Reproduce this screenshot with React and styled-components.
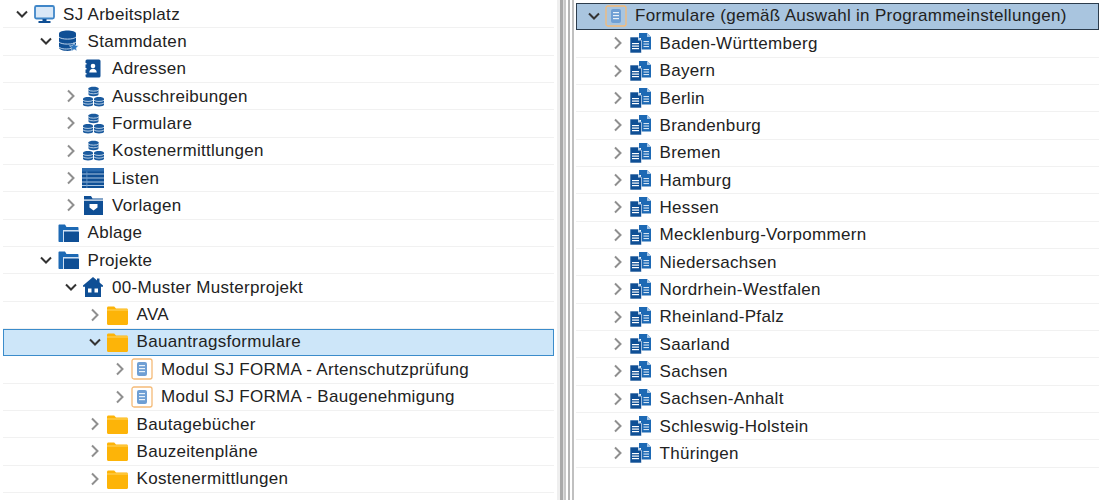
import React from 'react'
import styled, { createGlobalStyle } from 'styled-components'

const BLUE = '#0f4f95'
const ORANGE = '#fdb408'

const GlobalStyle = createGlobalStyle`
  html, body {
    margin: 0;
    padding: 0;
    background: #fff;
    overflow: hidden;
  }
`

const Monitor = () => (
  <svg width="21" height="20" viewBox="0 0 21 20">
    <rect x="1" y="2" width="19" height="12.500" rx="1.500" fill="#d9e8f7" stroke="#3f86c8" strokeWidth="1.800" />
    <rect x="8.500" y="15" width="4" height="2" fill={BLUE} />
    <rect x="4.500" y="17" width="12" height="2" fill={BLUE} />
  </svg>
)

const Database = () => (
  <svg width="21" height="22" viewBox="0 0 21 22">
    <path d="M1 3.500C1-.5 18-.5 18 3.500V17.500C18 22 1 22 1 17.500z" fill={BLUE} />
    <g fill="none" stroke="#cfe0f2" strokeWidth="0.900">
      <path d="M1 7c2 2.800 15 2.800 17 0" />
      <path d="M1 12c2 2.800 15 2.800 17 0" />
      <path d="M1 17c2 2.400 9 2.400 12 1.400" />
    </g>
    <path d="M16 12.500l1.400 3 3.200.3-2.400 2.100.8 3.100-3-1.700-3 1.700.8-3.100-2.400-2.100 3.200-.3z" fill="#2f78c0" stroke="#fff" strokeWidth="0.500" />
  </svg>
)

const AddressBook = () => (
  <svg width="16" height="19" viewBox="0 0 16 19">
    <rect x="0.500" y="0.500" width="15" height="18" rx="1.500" fill={BLUE} />
    <circle cx="8" cy="7" r="2.300" fill="#fff" />
    <path d="M4.300 13.500c0-5 7.400-5 7.400 0z" fill="#fff" />
    <rect x="0" y="4" width="1.500" height="1.500" fill="#fff" />
    <rect x="0" y="9" width="1.500" height="1.500" fill="#fff" />
    <rect x="0" y="14" width="1.500" height="1.500" fill="#fff" />
  </svg>
)

const Stack = ({ x, y }) => (
  <g transform={`translate(${x} ${y})`}>
    <path d="M0 1.800C0-.4 10-.4 10 1.800V8C10 10.200 0 10.200 0 8z" fill="#1a5a9e" />
    <path d="M0 3.500c1.500 1.500 8.500 1.500 10 0M0 6.200c1.500 1.500 8.500 1.500 10 0" fill="none" stroke="#dce8f4" strokeWidth="0.800" />
  </g>
)

const Coins = () => (
  <svg width="21" height="21" viewBox="0 0 21 21">
    <Stack x={5.500} y={0.500} />
    <Stack x={0} y={10.800} />
    <Stack x={11} y={10.800} />
  </svg>
)

const ListIcon = () => (
  <svg width="22" height="20" viewBox="0 0 22 20">
    <rect x="0" y="0" width="22" height="20" fill={BLUE} />
    <rect x="0" y="0" width="22" height="3.500" fill="#2c6cb0" />
    {[5.500, 9.500, 13.500, 17].map((y) => (
      <rect key={y} x="0" y={y} width="22" height="1" fill="#a9c4e0" />
    ))}
    <rect x="4.500" y="3.500" width="0.800" height="16.500" fill="#6d9bcb" />
  </svg>
)

const Template = () => (
  <svg width="21" height="20" viewBox="0 0 21 20">
    <path d="M1 20V1h7l1.500 2.500H20V20z" fill={BLUE} />
    <rect x="1" y="4.500" width="19" height="1.200" fill="#fff" />
    <path d="M6.500 9h8v3.500l-4 3-4-3z" fill="#fff" />
  </svg>
)

const BlueFolder = () => (
  <svg width="21" height="18" viewBox="0 0 21 18">
    <path d="M.5 17V1.500c0-.6.400-1 1-1h5.500l1.500 2.500h11c.6 0 1 .4 1 1V17c0 .6-.4 1-1 1h-18c-.6 0-1-.4-1-1z" fill="#1d69b4" />
    <path d="M6 18V7.500h15V18z" fill={BLUE} />
    <rect x="6" y="6" width="15" height="1.500" fill="#cfe0f2" />
    <rect x="5" y="6" width="1" height="12" fill="#cfe0f2" />
  </svg>
)

const House = () => (
  <svg width="20" height="20" viewBox="0 0 20 20">
    <path d="M10 0L20 8.500v1.200H0V8.500z" fill={BLUE} />
    <rect x="14" y="1.500" width="2.500" height="5" fill={BLUE} />
    <rect x="2" y="9" width="16" height="11" fill={BLUE} />
    <rect x="5" y="11.500" width="3.500" height="4" fill="#fff" />
    <rect x="11.500" y="11.500" width="3.500" height="4" fill="#fff" />
  </svg>
)

const YellowFolder = () => (
  <svg width="21" height="20" viewBox="0 0 21 20">
    <path d="M0 3c0-.8.500-1.500 1.500-1.500h5.700L9 3.500h10.500c.9 0 1.500.6 1.500 1.500v13.500c0 .8-.6 1.500-1.500 1.500h-18C.6 20 0 19.300 0 18.500z" fill={ORANGE} />
    <rect x="0" y="4.500" width="21" height="1" fill="#ffd564" />
  </svg>
)

const FormIcon = ({ dim }) => (
  <svg width="22" height="22" viewBox="0 0 22 22">
    <rect x="1" y="1" width="20" height="20" rx="2" fill={dim ? 'none' : '#fff'} stroke="#f5bb78" strokeWidth="1.300" />
    <rect x="6" y="4" width="10" height="14" rx="2" fill="#6f9fd4" />
    {[7, 10, 13].map((y) => (
      <rect key={y} x="8" y={y} width="6" height="1.200" fill="#eaf2fa" />
    ))}
  </svg>
)

const StateForm = () => (
  <svg width="21" height="20" viewBox="0 0 21 20">
    <path d="M9 0h8l4 4v12.500h-10V5H9z" fill="#1d69b4" />
    <path d="M17 0l4 4h-4z" fill="#a9c8e8" />
    <path d="M0 4h8l3.500 3.500V20H0z" fill={BLUE} stroke="#fff" strokeWidth="0.600" />
    <path d="M8 4l3.500 3.500H8z" fill="#bcd4ec" />
    {[10, 12.500, 15].map((y) => (
      <rect key={y} x="2" y={y} width="7" height="1.200" fill="#fff" />
    ))}
    {[8, 10.500, 13].map((y) => (
      <rect key={y} x="13.500" y={y} width="5.500" height="1.100" fill="#d5e4f3" />
    ))}
  </svg>
)

const Chevron = ({ open }) => (
  <ChevronBox>
    {open ? (
      <svg width="12" height="12" viewBox="0 0 12 12">
        <path d="M1 3.500l5 5 5-5" fill="none" stroke="#333" strokeWidth="2" />
      </svg>
    ) : (
      <svg width="12" height="14" viewBox="0 0 12 14">
        <path d="M3 1.500l5.500 5.500L3 12.500" fill="none" stroke="#8f8f8f" strokeWidth="2" />
      </svg>
    )}
  </ChevronBox>
)

const leftRows = [
  { depth: 0, arrow: 'open', icon: <Monitor />, label: 'SJ Arbeitsplatz' },
  { depth: 1, arrow: 'open', icon: <Database />, label: 'Stammdaten' },
  { depth: 2, icon: <AddressBook />, label: 'Adressen' },
  { depth: 2, arrow: 'closed', icon: <Coins />, label: 'Ausschreibungen' },
  { depth: 2, arrow: 'closed', icon: <Coins />, label: 'Formulare' },
  { depth: 2, arrow: 'closed', icon: <Coins />, label: 'Kostenermittlungen' },
  { depth: 2, arrow: 'closed', icon: <ListIcon />, label: 'Listen' },
  { depth: 2, arrow: 'closed', icon: <Template />, label: 'Vorlagen' },
  { depth: 1, icon: <BlueFolder />, label: 'Ablage' },
  { depth: 1, arrow: 'open', icon: <BlueFolder />, label: 'Projekte' },
  { depth: 2, arrow: 'open', icon: <House />, label: '00-Muster Musterprojekt' },
  { depth: 3, arrow: 'closed', icon: <YellowFolder />, label: 'AVA' },
  { depth: 3, arrow: 'open', icon: <YellowFolder />, label: 'Bauantragsformulare', selected: true },
  { depth: 4, arrow: 'closed', icon: <FormIcon />, label: 'Modul SJ FORMA - Artenschutzprüfung' },
  { depth: 4, arrow: 'closed', icon: <FormIcon />, label: 'Modul SJ FORMA - Baugenehmigung' },
  { depth: 3, arrow: 'closed', icon: <YellowFolder />, label: 'Bautagebücher' },
  { depth: 3, arrow: 'closed', icon: <YellowFolder />, label: 'Bauzeitenpläne' },
  { depth: 3, arrow: 'closed', icon: <YellowFolder />, label: 'Kostenermittlungen' },
]

const states = [
  'Baden-Württemberg',
  'Bayern',
  'Berlin',
  'Brandenburg',
  'Bremen',
  'Hamburg',
  'Hessen',
  'Mecklenburg-Vorpommern',
  'Niedersachsen',
  'Nordrhein-Westfalen',
  'Rheinland-Pfalz',
  'Saarland',
  'Sachsen',
  'Sachsen-Anhalt',
  'Schleswig-Holstein',
  'Thüringen',
]

const TreeRow = ({ depth, arrow, icon, label, selected, focused, base = 12 }) => (
  <Row $depth={depth} $selected={selected} $focused={focused} $base={base}>
    {arrow ? <Chevron open={arrow === 'open'} /> : <ChevronBox />}
    <IconBox>{icon}</IconBox>
    <Label>{label}</Label>
  </Row>
)

export default () => (
  <>
    <GlobalStyle />
    <Page>
      <LeftPane>
        {leftRows.map((row) => (
          <TreeRow key={row.label + row.depth} {...row} />
        ))}
      </LeftPane>
      <Splitter>
        <Stripe $w={3} $c="#efefef" />
        <Stripe $w={3} $c="#a9a9a9" />
        <Stripe $w={1} $c="#dddddd" />
        <Stripe $w={2} $c="#c8c8c8" />
        <Stripe $w={2} $c="#ffffff" />
        <Stripe $w={2} $c="#b5b5b5" />
        <Stripe $w={2} $c="#ffffff" />
        <Stripe $w={2} $c="#c0c0c0" />
      </Splitter>
      <RightPane>
        <TreeRow
          depth={0}
          arrow="open"
          icon={<FormIcon dim />}
          label="Formulare (gemäß Auswahl in Programmeinstellungen)"
          base={11}
          focused
        />
        {states.map((name) => (
          <TreeRow key={name} depth={1} arrow="closed" icon={<StateForm />} label={name} base={11} />
        ))}
      </RightPane>
    </Page>
  </>
)

const Page = styled.div`
  display: flex;
  width: 1099px;
  height: 500px;
  overflow: hidden;
  background: #fff;
  font-family: 'Liberation Sans', Arial, sans-serif;
  font-size: 17px;
  letter-spacing: 0.3px;
  color: #222;
`

const LeftPane = styled.div`
  width: 551px;
  margin-left: 3px;
  flex-shrink: 0;
  padding-top: 1px;
`

const RightPane = styled.div`
  flex: 1;
  margin-left: 2px;
  padding-top: 3px;
`

const Splitter = styled.div`
  display: flex;
  width: 17px;
  margin-left: 3px;
  flex-shrink: 0;
`

const Stripe = styled.div`
  width: ${(p) => p.$w}px;
  background: ${(p) => p.$c};
`

const Row = styled.div`
  display: flex;
  align-items: center;
  box-sizing: border-box;
  height: 27.33px;
  padding-left: ${(p) => p.$base + p.$depth * 24.5}px;
  border-bottom: 1px solid #f1f1f1;
  ${(p) =>
    p.$selected &&
    `
    background: #cde6f9;
    border: 1px solid #3b8ccb;
    padding-left: ${p.$base - 1 + p.$depth * 24.5}px;
    padding-bottom: 2px;
  `}
  ${(p) =>
    p.$focused &&
    `
    background: #a9c5df;
    border: 1px solid #2c3c4c;
    padding-left: ${p.$base - 1 + p.$depth * 24.5}px;
    padding-bottom: 2px;
  `}
`

const ChevronBox = styled.span`
  display: flex;
  align-items: center;
  justify-content: center;
  width: 13px;
  height: 14px;
  margin-right: 5px;
  flex-shrink: 0;
`

const IconBox = styled.span`
  display: flex;
  align-items: center;
  justify-content: center;
  width: 22px;
  height: 22px;
  margin-right: 8px;
  flex-shrink: 0;
`

const Label = styled.span`
  white-space: nowrap;
  padding-top: 1px;
`
